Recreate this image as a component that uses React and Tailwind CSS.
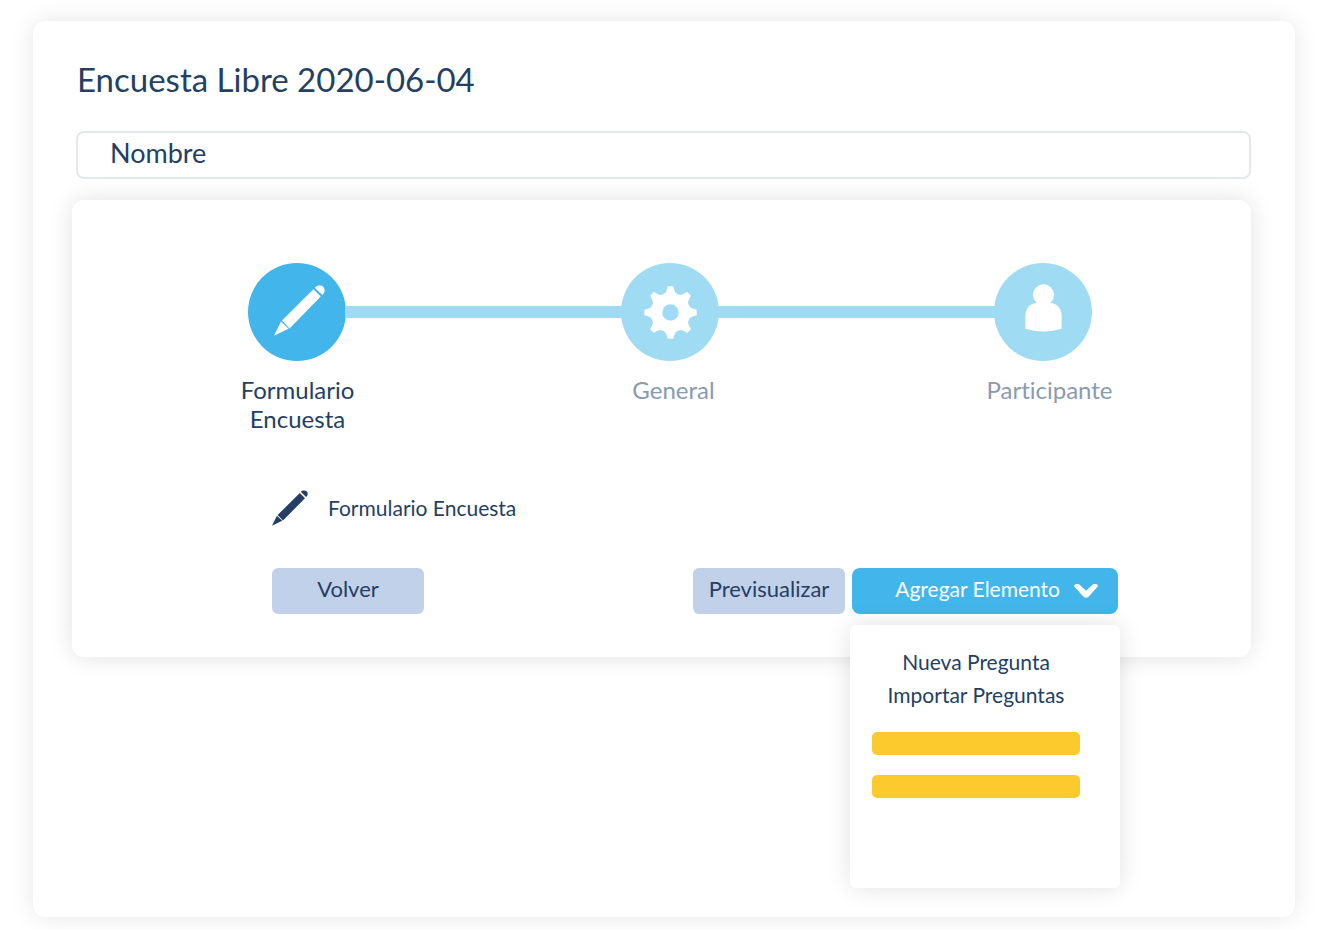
import React, { useState } from 'react';
import clsx from 'clsx';

function PencilIcon({ className }) {
    return (
        <svg viewBox="0 0 154 154" fill="currentColor" className={className} aria-hidden="true">
            <path d="M0 153 L21 110 L44 132 Z" />
            <path d="M24 107 L119 13 L141 35 L47 131 Z" />
            <path d="M123 8 C130 0 143 0 149 6 C155 12 154 23 146 30 Z" />
        </svg>
    );
}

const TEETH = [0, 45, 90, 135, 180, 225, 270, 315];

function GearIcon({ className }) {
    return (
        <svg viewBox="-80 -80 160 160" fill="currentColor" className={className} aria-hidden="true">
            <circle r="42" fill="none" stroke="currentColor" strokeWidth="34" />
            {TEETH.map(angle => (
                <path key={angle} d="M-8 -79 H8 Q11 -67 15 -60 L23 -54 L15 -46 H-15 L-23 -54 L-15 -60 Q-11 -67 -8 -79 Z" transform={`rotate(${angle})`} />
            ))}
        </svg>
    );
}

function PersonIcon({ className }) {
    return (
        <svg viewBox="0 0 112 146" fill="currentColor" className={className} aria-hidden="true">
            <circle cx="56" cy="33" r="32" />
            <path d="M1 136 V97 C1 75 14 59 37 58 H75 C98 59 111 75 111 97 V136 Q56 153 1 136 Z" />
        </svg>
    );
}

function ChevronIcon({ className }) {
    return (
        <svg viewBox="0 0 72 42" fill="currentColor" className={className} aria-hidden="true">
            <path d="M2 2 Q8 -2 15 1 L36 20 L57 1 Q65 -2 70 2 Q73 5 70 9 L43 39 Q36 44 29 39 L2 9 Q-1 5 2 2 Z" />
        </svg>
    );
}

const steps = [
    { label: 'Formulario Encuesta', icon: <PencilIcon className="mb-1 ml-1 size-[51px]" /> },
    { label: 'General', icon: <GearIcon className="size-[53px]" /> },
    { label: 'Participante', icon: <PersonIcon className="mb-2 h-12 w-[37px]" /> },
];

function Stepper({ current }) {
    return (
        <div className="pr-1">
            <div className="flex items-center pl-[15px] pr-[22px]">
                {steps.map((step, i) => (
                    <React.Fragment key={step.label}>
                        {i > 0 && <div className="-mx-px h-3 flex-1 bg-[#a0dbf4]" />}
                        <div className={clsx(
                            'flex size-[98px] shrink-0 items-center justify-center rounded-full text-white',
                            i === current ? 'bg-[#42b6ea]' : 'bg-[#a0dbf4]'
                        )}>
                            {step.icon}
                        </div>
                    </React.Fragment>
                ))}
            </div>
            <ol className="mt-[14px] flex justify-between text-center text-[24px] leading-[29px]">
                {steps.map((step, i) => (
                    <li key={step.label} className={clsx('w-[129px]', i !== current && 'text-[#8a9bb0]')}>
                        {step.label}
                    </li>
                ))}
            </ol>
        </div>
    );
}

export default function App() {
    const [name, setName] = useState('');
    const [menuOpen, setMenuOpen] = useState(true);

    return (
        <div className="flex min-h-screen flex-col bg-white pt-[21px] pr-[29px] pb-[13px] pl-[33px] font-['Lato',sans-serif] text-[#243f63] [font-variant-ligatures:none]">
            <main className="flex-1 rounded-xl bg-white pt-[37px] pr-11 pb-10 pl-[39px] shadow-[0_0_24px_rgba(0,0,0,0.1)]">
                <h1 className="pl-[5px] text-[33px] leading-[42px]">Encuesta Libre 2020-06-04</h1>

                <input
                    type="text"
                    aria-label="Nombre"
                    placeholder="Nombre"
                    value={name}
                    onChange={e => setName(e.target.value)}
                    className="ml-1 mt-[31px] block h-12 w-[calc(100%-4px)] rounded-lg border-2 border-[#e4e8ed] bg-white px-8 pb-1.5 text-[27px] placeholder:text-[#243f63] focus:outline-none"
                />

                <section className="mt-[21px] rounded-xl bg-white pt-[63px] pr-[133px] pb-[43px] pl-[161px] shadow-[0_0_24px_rgba(0,0,0,0.12)]">
                    <Stepper current={0} />

                    <div className="mt-[57px] pl-[39px]">
                        <h2 className="flex items-center text-[21px] leading-9">
                            <PencilIcon className="mr-5 size-9" />
                            Formulario Encuesta
                        </h2>

                        <div className="mt-[42px] flex items-center gap-[7px] text-[22px] leading-7">
                            <button type="button" className="mr-auto h-[46px] w-[152px] rounded-md bg-[#c2d1ea] pb-1">Volver</button>
                            <button type="button" className="h-[46px] w-[152px] rounded-md bg-[#c2d1ea] pb-1">Previsualizar</button>

                            <div className="relative text-[21px]">
                                <button
                                    type="button"
                                    aria-expanded={menuOpen}
                                    onClick={() => setMenuOpen(!menuOpen)}
                                    className="flex h-[46px] w-[266px] items-center justify-end gap-[14px] rounded-lg bg-[#42b6ea] pr-5 pb-1 text-white"
                                >
                                    Agregar Elemento
                                    <ChevronIcon className="mt-1 h-[14px] w-6" />
                                </button>

                                {menuOpen && (
                                    <div className="absolute -inset-x-0.5 top-full mt-[11px] min-h-[263px] rounded-md bg-white pt-5 pr-10 pb-6 pl-[22px] text-center shadow-[0_0_24px_rgba(0,0,0,0.12)]">
                                        <ul className="leading-[33px]">
                                            <li><button type="button">Nueva Pregunta</button></li>
                                            <li><button type="button">Importar Preguntas</button></li>
                                        </ul>
                                        <div className="mt-[21px] h-[23px] rounded-[5px] bg-[#fdca2e]" />
                                        <div className="mt-5 h-[23px] rounded-[5px] bg-[#fdca2e]" />
                                    </div>
                                )}
                            </div>
                        </div>
                    </div>
                </section>
            </main>
        </div>
    );
}
